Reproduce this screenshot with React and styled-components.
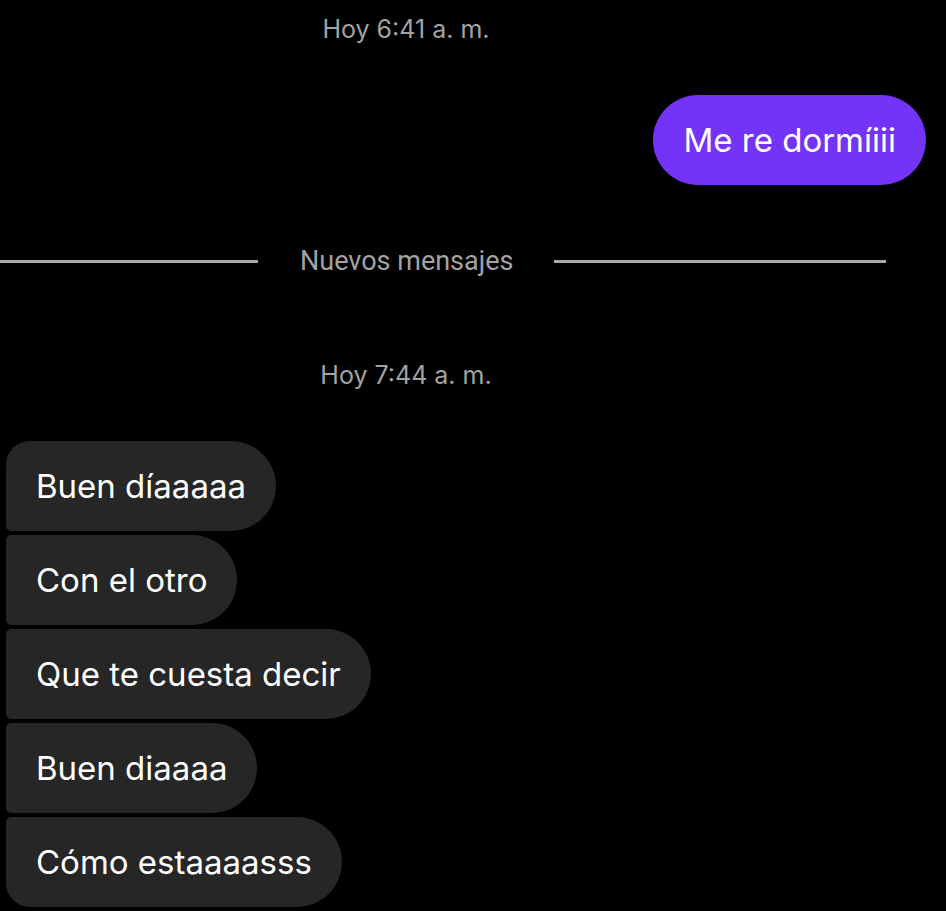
import React from 'react';
import styled, { createGlobalStyle } from 'styled-components';

const GlobalStyle = createGlobalStyle`
  html, body {
    margin: 0;
    padding: 0;
    background: #000;
  }
  body {
    font-family: 'Inter', 'Noto Sans', sans-serif;
    -webkit-font-smoothing: antialiased;
  }
`;

const Page = styled.div`
  width: 946px;
  height: 911px;
  overflow: hidden;
  background: #000;
  display: flex;
  flex-direction: column;
`;

const Stamp = styled.div`
  width: 812px;
  text-align: center;
  color: #a3a3a3;
  font-size: 25px;
  line-height: 30px;
  margin-top: ${(p) => p.$top}px;
`;

const OutRow = styled.div`
  display: flex;
  justify-content: flex-end;
  padding-right: 20px;
  margin-top: 51px;
`;

const Bubble = styled.div`
  font-size: 33px;
  line-height: 40px;
  padding: 25px 30px;
  color: #fff;
  white-space: nowrap;
`;

const OutBubble = styled(Bubble)`
  background: #7434f8;
  border-radius: 45px;
`;

const Divider = styled.div`
  display: flex;
  align-items: center;
  margin-top: 61px;
  width: 886px;
`;

const Line = styled.div`
  height: 3px;
  background: #a8a8a8;
  width: ${(p) => p.$w}px;
  flex: ${(p) => (p.$grow ? 1 : 'none')};
`;

const DividerText = styled.div`
  font-family: 'Roboto', sans-serif;
  font-size: 27px;
  line-height: 30px;
  color: #a3a3a3;
  padding: 0 41px 0 42px;
`;

const Group = styled.div`
  display: flex;
  flex-direction: column;
  align-items: flex-start;
  gap: 4px;
  padding-left: 6px;
  margin-top: 51px;
`;

const InBubble = styled(Bubble)`
  background: #262626;
  border-radius: ${(p) => (p.$first ? 24 : 5)}px 45px 45px ${(p) => (p.$last ? 24 : 5)}px;
`;

const incoming = [
  'Buen díaaaaa',
  'Con el otro',
  'Que te cuesta decir',
  'Buen diaaaa',
  'Cómo estaaaasss',
];

export default function App() {
  return (
    <Page>
      <GlobalStyle />
      <Stamp $top={14}>Hoy 6:41 a. m.</Stamp>
      <OutRow>
        <OutBubble>Me re dormíiii</OutBubble>
      </OutRow>
      <Divider>
        <Line $w={258} />
        <DividerText>Nuevos mensajes</DividerText>
        <Line $grow />
      </Divider>
      <Stamp $top={84}>Hoy 7:44 a. m.</Stamp>
      <Group>
        {incoming.map((text, i) => (
          <InBubble key={i} $first={i === 0} $last={i === incoming.length - 1}>
            {text}
          </InBubble>
        ))}
      </Group>
    </Page>
  );
}
